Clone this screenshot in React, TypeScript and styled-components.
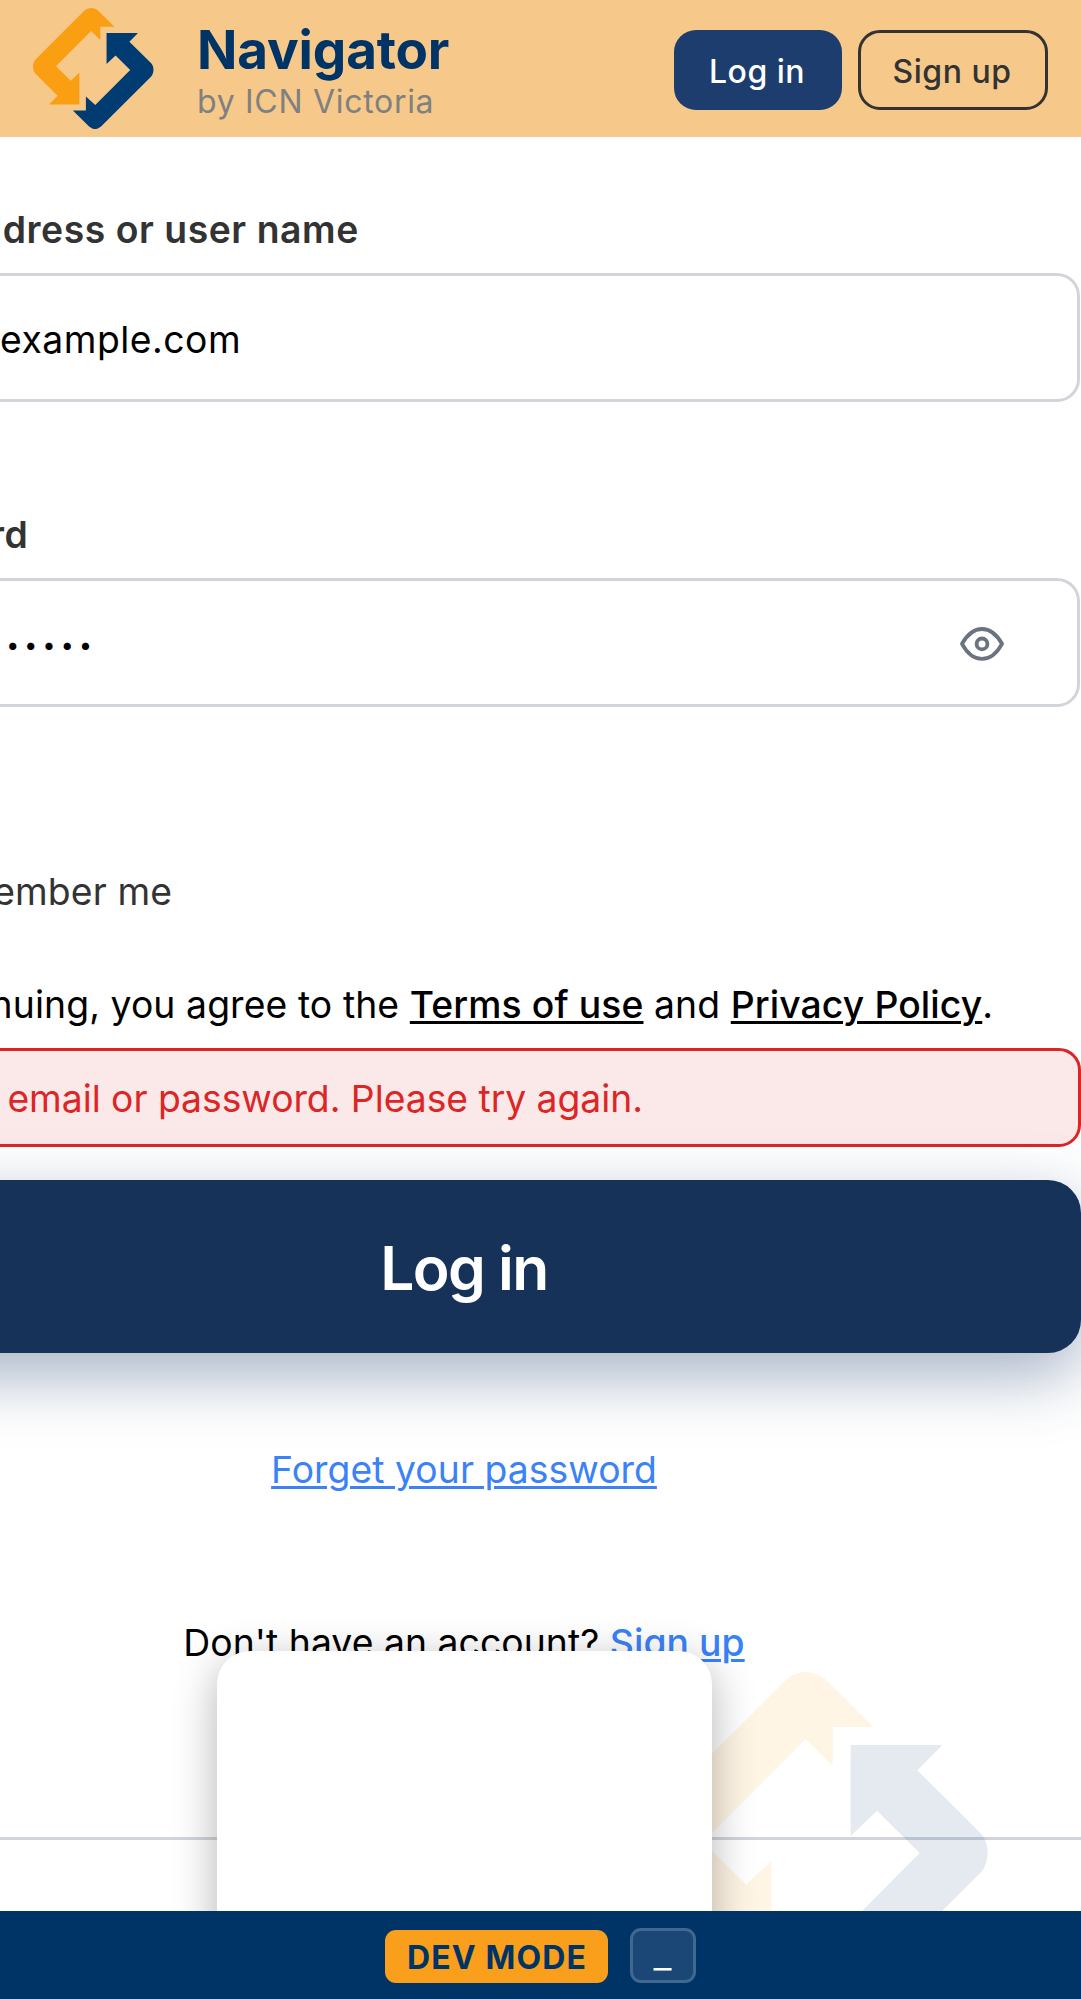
import React from "react";
import styled, { createGlobalStyle } from "styled-components";

const GlobalStyle = createGlobalStyle`
  *, *::before, *::after { box-sizing: border-box; }
  body {
    margin: 0;
    background: #fff;
    font-family: Inter, "Liberation Sans", sans-serif;
    overflow: hidden;
  }
`;

const Page = styled.div`
  width: 1081px;
  height: 1999px;
  display: flex;
  flex-direction: column;
  overflow: hidden;
`;

const Header = styled.header`
  flex: none;
  height: 137px;
  padding: 3px 33px 0;
  display: flex;
  align-items: center;
  background: #f6c98a;
`;

const LogoBox = styled.div`
  width: 120.5px;
  height: 121px;
  margin: 0 43.5px 4px 0;
  svg { display: block; width: 100%; height: 100%; }
`;

const Brand = styled.div`
  flex: 1;
`;

const BrandName = styled.div`
  font-size: 53px;
  line-height: 64px;
  font-weight: 700;
  letter-spacing: -0.15px;
  color: #003366;
`;

const BrandBy = styled.div`
  font-size: 32px;
  line-height: 40px;
  letter-spacing: 0.7px;
  color: #808080;
`;

const HeaderActions = styled.div`
  display: flex;
  gap: 16px;
`;

const HeaderButton = styled.button<{ $outlined?: boolean }>`
  width: ${(p) => (p.$outlined ? 190 : 168)}px;
  height: 80px;
  padding: 4px 2px 0 0;
  border: ${(p) => (p.$outlined ? "3px solid #333" : "none")};
  border-radius: 22px;
  background: ${(p) => (p.$outlined ? "transparent" : "#1c3d6e")};
  color: ${(p) => (p.$outlined ? "#333" : "#fff")};
  font: 500 32px/40px Inter, sans-serif;
  letter-spacing: 0.5px;
`;

const Main = styled.main`
  position: relative;
  height: 1774px;
  overflow: hidden;
`;

/* The form is wider than the viewport and runs off its left edge. */
const Form = styled.form`
  width: 1234px;
  margin-left: -153px;
  padding-top: 70px;
  display: flex;
  flex-direction: column;
  font-size: 37.3px;
  line-height: 46px;
  letter-spacing: 0.1px;
  color: #000;
`;

const Field = styled.div<{ $gap: number }>`
  width: 1233px;
  margin-bottom: ${(p) => p.$gap}px;
  display: flex;
  flex-direction: column;
  gap: 20px;
`;

const Label = styled.label`
  font-weight: 600;
  letter-spacing: 0.56px;
  color: #333;
`;

const InputBox = styled.div`
  height: 129px;
  padding: 4px 73px 0 46px;
  display: flex;
  align-items: center;
  border: 3px solid #d1d5db;
  border-radius: 23px;
  background: #fff;
`;

const Value = styled.span`
  flex: 1;
  letter-spacing: 0.5px;
`;

const LocalPart = styled.span`
  display: inline-block;
  width: 104px;
  text-align: right;
`;

const Dots = styled.span`
  flex: 1;
  padding: 1px 0 0 1px;
  font-size: 23px;
  letter-spacing: 5.25px;
`;

const EyeIcon = styled.svg`
  width: 44px;
  height: 34px;
  margin-bottom: 1px;
  fill: none;
  stroke: #6b7280;
  stroke-width: 3.8;
`;

const Remember = styled.label`
  width: 325px;
  margin-bottom: 67px;
  display: flex;
  justify-content: flex-end;
  color: #333;
`;

const Terms = styled.div`
  margin-bottom: 20px;
  white-space: pre;
`;

const Link = styled.a<{ $blue?: boolean; $bold?: boolean }>`
  color: ${(p) => (p.$blue ? "#3b82f6" : "#000")};
  font-weight: ${(p) => (p.$bold ? 500 : 400)};
  text-decoration: underline;
  text-decoration-thickness: 2.75px;
  text-underline-offset: 3.4px;
`;

const Alert = styled.div`
  height: 99px;
  margin-bottom: 33px;
  padding: 2px 33px 0;
  display: flex;
  align-items: center;
  border: 3px solid #dc2626;
  border-radius: 22px;
  background: #fbe9e9;
  color: #dc2626;
  letter-spacing: -0.03px;
`;

const Submit = styled.button`
  height: 173px;
  padding: 2px 0 0;
  border: 0;
  border-radius: 33px;
  background: #163259;
  color: #fff;
  font: 600 60.5px/72px Inter, sans-serif;
  letter-spacing: -1.55px;
  box-shadow: 0 22px 66px rgba(28, 61, 110, 0.4);
`;

const Centered = styled.div<{ $top: number }>`
  margin-top: ${(p) => p.$top}px;
  text-align: center;
  letter-spacing: 0.05px;
`;

const Divider = styled.hr`
  width: 100%;
  height: 3px;
  margin: 171px 0 0;
  border: 0;
  background: #d1d5db;
`;

const Watermark = styled.div`
  position: absolute;
  left: 636.3px;
  top: 1534.7px;
  width: 351.7px;
  height: 353.7px;
  opacity: 0.1;
  svg { display: block; width: 100%; height: 100%; }
`;

const Sheet = styled.div`
  position: absolute;
  left: 217px;
  top: 1514px;
  width: 495px;
  height: 400px;
  border-radius: 33px;
  background: #fff;
  box-shadow: 0 11px 44px rgba(0, 0, 0, 0.3);
`;

const Footer = styled.footer`
  position: relative;
  flex: none;
  height: 88px;
  padding-bottom: 16px;
  display: flex;
  justify-content: center;
  align-items: flex-end;
  gap: 22px;
  background: #003366;
`;

const DevBadge = styled.div`
  width: 223px;
  height: 53px;
  padding: 3px 0 0 1px;
  border-radius: 11px;
  background: #fa9f1b;
  color: #003366;
  font-size: 32px;
  line-height: 50px;
  font-weight: 700;
  letter-spacing: 1.15px;
  text-align: center;
`;

const Minimize = styled.button`
  width: 66px;
  height: 55px;
  padding: 0 1px 4px 0;
  border: 3px solid #406891;
  border-radius: 11px;
  background: #1a4775;
  color: #fff;
  font: 300 40px/46px Inter, sans-serif;
`;

function Logo({ orange = "#fa9f12", blue = "#003c71" }: { orange?: string; blue?: string }) {
  return (
    <svg viewBox="-131 95 1055 1061" preserveAspectRatio="none">
      <path
        fill={orange}
        d="M582 260H459V376L378 297L70 605L200 733L275 661V941H9L84 865L-109 672C-138 643-138 575-109 546L318 120C351 87 407 87 440 120Z"
      />
      <path
        fill={blue}
        d="M513 314H788L713 390L902 578C931 607 931 668 902 697L478 1121C431 1168 394 1168 347 1121L218 993H332V871L414 946L720 638L592 511L513 587Z"
      />
    </svg>
  );
}

export default function App() {
  return (
    <Page>
      <GlobalStyle />
      <Header>
        <LogoBox>
          <Logo />
        </LogoBox>
        <Brand>
          <BrandName>Navigator</BrandName>
          <BrandBy>by ICN Victoria</BrandBy>
        </Brand>
        <HeaderActions>
          <HeaderButton>Log in</HeaderButton>
          <HeaderButton $outlined>Sign up</HeaderButton>
        </HeaderActions>
      </Header>
      <Main>
        <Form>
          <Field $gap={110}>
            <Label>Email address or user name</Label>
            <InputBox>
              <Value>
                <LocalPart>me@</LocalPart>example.com
              </Value>
            </InputBox>
          </Field>
          <Field $gap={162}>
            <Label>Password</Label>
            <InputBox>
              <Dots>•••••••••••</Dots>
              <EyeIcon viewBox="0 0 44 34">
                <path d="M2 16.8C7 8 14 2 22 2S37 8 42 16.8C37 26 30 31.8 22 31.8S7 26 2 16.8Z" strokeLinejoin="round" />
                <circle cx="22" cy="16.9" r="5.4" />
              </EyeIcon>
            </InputBox>
          </Field>
          <Remember>Remember me</Remember>
          <Terms>
            By continuing, you agree to the <Link $bold>Terms of use</Link> and <Link $bold>Privacy Policy</Link>.
          </Terms>
          <Alert>Invalid email or password. Please try again.</Alert>
          <Submit type="button">Log in</Submit>
          <Centered $top={94}>
            <Link $blue>Forget your password</Link>
          </Centered>
          <Centered $top={127}>
            Don't have an account? <Link $blue $bold>Sign up</Link>
          </Centered>
          <Divider />
        </Form>
        <Watermark>
          <Logo orange="#ffa30c" blue="#003878" />
        </Watermark>
        <Sheet />
      </Main>
      <Footer>
        <DevBadge>DEV MODE</DevBadge>
        <Minimize>_</Minimize>
      </Footer>
    </Page>
  );
}
